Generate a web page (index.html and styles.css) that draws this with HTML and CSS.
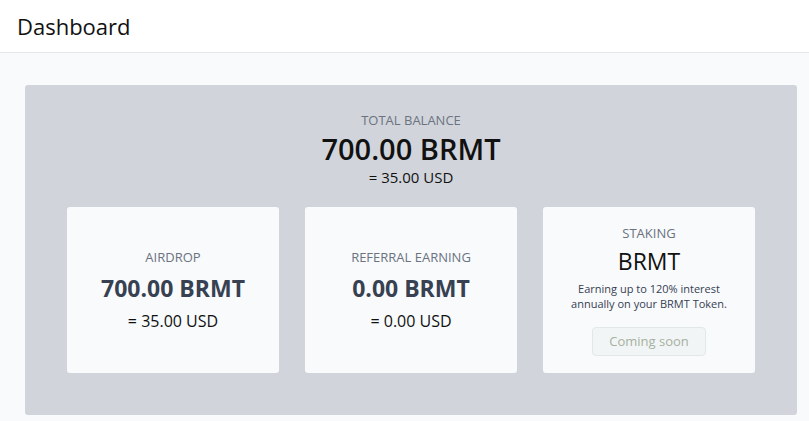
FILE: index.html
```html
<!DOCTYPE html>
<html lang="en">
<head>
  <meta charset="UTF-8" />
  <meta name="viewport" content="width=device-width, initial-scale=1" />
  <title>Dashboard</title>
  <link rel="stylesheet" href="styles.css">
</head>
<body>
  <div class="top-bar">
    <h1>Dashboard</h1>
  </div>

  <div class="content">
    <div class="balance-panel">
      <div class="total">
        <div class="label">TOTAL BALANCE</div>
        <div class="total-amount">700.00 BRMT</div>
        <div class="total-usd">= 35.00 USD</div>
      </div>

      <div class="cards">
        <div class="card">
          <div class="label">AIRDROP</div>
          <div class="amount">700.00 BRMT</div>
          <div class="usd">= 35.00 USD</div>
        </div>
        <div class="card">
          <div class="label">REFERRAL EARNING</div>
          <div class="amount">0.00 BRMT</div>
          <div class="usd">= 0.00 USD</div>
        </div>
        <div class="card staking">
          <div class="label">STAKING</div>
          <div class="token">BRMT</div>
          <p class="note">Earning up to 120% interest<br>annually on your BRMT Token.</p>
          <button class="soon" disabled>Coming soon</button>
        </div>
      </div>
    </div>
  </div>
</body>
</html>
```

FILE: styles.css
```css
* {
  box-sizing: border-box;
}
body {
  font-family: 'Open Sans', 'Noto Sans', sans-serif;
  background: #f8fafc;
  margin: 0;
  color: #111;
}

.top-bar {
  background: white;
  height: 53px;
  border-bottom: 1px solid #e5e7eb;
  padding: 0 17px;
  display: flex;
  align-items: center;
}

h1 {
  margin: 0;
  font-size: 22px;
  font-weight: 400;
  color: #111;
}

.content {
  padding: 32px 12px 20px 25px;
}

.balance-panel {
  background: #d1d5db;
  border-radius: 3px;
  padding: 26px 42px 42px 42px;
}

.total {
  text-align: center;
}

.label {
  font-size: 13px;
  color: #6b7280;
}

.total-amount {
  font-size: 29px;
  font-weight: 600;
  line-height: 1.2;
  margin-top: 3px;
}

.total-usd {
  font-size: 15px;
  margin-top: 0;
}

.cards {
  display: grid;
  grid-template-columns: repeat(3, 1fr);
  gap: 26px;
  margin-top: 20px;
}

.card {
  background: #f8fafc;
  border-radius: 3px;
  height: 166px;
  display: flex;
  flex-direction: column;
  align-items: center;
  justify-content: center;
  text-align: center;
}

.amount {
  font-size: 23px;
  font-weight: 700;
  color: #374151;
  margin-top: 6px;
}

.usd {
  font-size: 16px;
  margin-top: 6px;
}

.token {
  font-size: 23px;
  margin-top: 3px;
}

.note {
  font-size: 11px;
  line-height: 15px;
  color: #374151;
  margin: 4px 0 0 0;
}

button.soon {
  font-family: inherit;
  font-size: 13px;
  color: #a6b0a2;
  background: #f1f5f5;
  border: 1px solid #e2e8ea;
  border-radius: 4px;
  width: 114px;
  height: 29px;
  margin-top: 16px;
  padding: 0;
}
```
